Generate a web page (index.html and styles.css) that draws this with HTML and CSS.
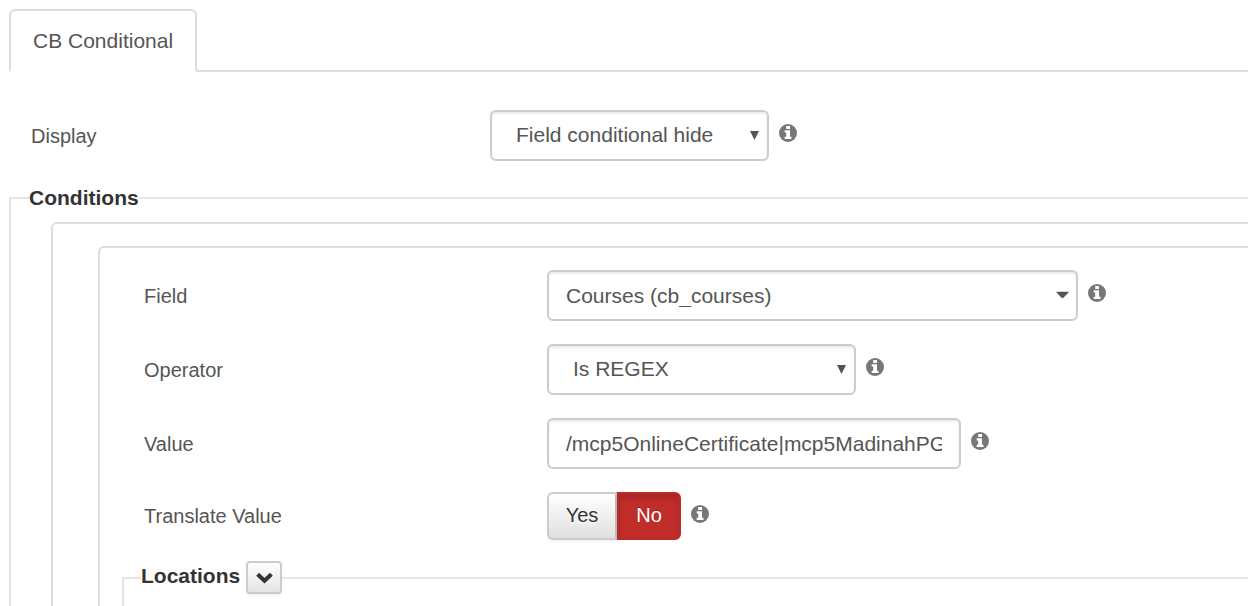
FILE: index.html
```html
<!DOCTYPE html>
<html lang="en">
<head>
  <meta charset="UTF-8">
  <meta name="viewport" content="width=device-width, initial-scale=1.0">
  <title>CB Conditional</title>
  <link rel="stylesheet" href="styles.css">
</head>
<body>
  <svg width="0" height="0" class="sprite" aria-hidden="true">
    <symbol id="info" viewBox="0 0 18 18">
      <circle cx="9" cy="9" r="9" fill="#777"/>
      <path fill="#fff" d="M7.200 2h3.800v3H7.200zM5.700 6.200H11v6.500h1.500V15H5.700v-2.300h1.500V8.500H5.700z"/>
    </symbol>
    <symbol id="arrow" viewBox="0 0 9 9">
      <path fill="#555" d="M0 0h9L4.500 9z"/>
    </symbol>
    <symbol id="caret" viewBox="0 0 14 8">
      <path fill="#555" d="M1 .5h12q1 .5 .3 1.2L8 7q-1 .8-2 0L.7 1.700Q0 1 1 .5z"/>
    </symbol>
  </svg>

  <div class="page">
    <nav class="tabs">
      <a class="tab" href="#conditional">CB Conditional</a>
    </nav>

    <form class="pane" id="conditional">
      <div class="row row-display">
        <label for="display">Display</label>
        <div class="select">
          <select id="display" class="control size-small">
            <option>Field conditional hide</option>
          </select>
          <svg class="arrow"><use href="#arrow"/></svg>
        </div>
        <svg class="info"><use href="#info"/></svg>
      </div>

      <fieldset class="conditions">
        <legend>Conditions</legend>
        <div class="box">
          <div class="box">
            <div class="rows">
              <div class="row">
                <label for="field">Field</label>
                <div class="select">
                  <select id="field" class="control size-large">
                    <option>Courses (cb_courses)</option>
                  </select>
                  <svg class="caret"><use href="#caret"/></svg>
                </div>
                <svg class="info"><use href="#info"/></svg>
              </div>

              <div class="row">
                <label for="operator">Operator</label>
                <div class="select">
                  <select id="operator" class="control size-medium">
                    <option>Is REGEX</option>
                  </select>
                  <svg class="arrow"><use href="#arrow"/></svg>
                </div>
                <svg class="info"><use href="#info"/></svg>
              </div>

              <div class="row">
                <label for="value">Value</label>
                <input type="text" id="value" class="control size-input" value="/mcp5OnlineCertificate|mcp5MadinahPG">
                <svg class="info"><use href="#info"/></svg>
              </div>

              <div class="row row-toggle">
                <label for="translate-no">Translate Value</label>
                <div class="btn-group">
                  <button type="button" class="btn">Yes</button>
                  <button type="button" class="btn btn-danger" id="translate-no">No</button>
                </div>
                <svg class="info"><use href="#info"/></svg>
              </div>
            </div>

            <fieldset class="locations">
              <legend>
                Locations
                <button type="button" class="btn-toggle" aria-label="Toggle locations">
                  <svg viewBox="0 0 16 11"><path d="M1.500 2l6.500 6 6.500-6" fill="none" stroke="#333" stroke-width="3.800"/></svg>
                </button>
              </legend>
            </fieldset>
          </div>
        </div>
      </fieldset>
    </form>
  </div>
</body>
</html>
```
FILE: styles.css
```css
* {
  box-sizing: border-box;
}

body {
  margin: 0;
  background-color: #fff;
  color: #555;
  font-family: "Liberation Sans", Arial, sans-serif;
  font-size: 20px;
  line-height: 24px;
}

.sprite {
  position: absolute;
}

.page {
  padding: 9px 0 0 9px;
}

/* Tabs */
.tabs {
  display: flex;
  height: 63px;
  border-bottom: 2px solid #ddd;
}

.tab {
  height: 63px;
  padding: 18px 22px;
  border: 2px solid #ddd;
  border-bottom-color: #fff;
  border-radius: 6px 6px 0 0;
  background-color: #fff;
  color: #555;
  font-size: 21px;
  text-decoration: none;
}

.pane {
  padding-top: 38px;
}

/* Rows */
.rows {
  display: flex;
  flex-direction: column;
  gap: 23px;
  padding: 22px 0 21px 44px;
}

.row {
  display: flex;
  align-items: center;
}

.row label {
  flex: 0 0 403px;
}

.row-display {
  padding-left: 22px;
  margin-bottom: 25px;
}

.row-display label {
  flex-basis: 459px;
}

.row-toggle {
  height: 48px;
}

.info {
  flex: none;
  width: 18px;
  height: 18px;
  margin: 0 0 5px 10px;
}

/* Controls */
.control {
  display: block;
  height: 51px;
  padding: 0 17px;
  border: 2px solid #ccc;
  border-radius: 6px;
  background-color: #fff;
  box-shadow: inset 0 2px 2px rgba(0, 0, 0, 0.075);
  color: #555;
  font-family: inherit;
  font-size: 21px;
  appearance: none;
}

.select {
  position: relative;
}

.select .control {
  padding: 0 24px 2px;
}

.select .size-large {
  padding: 0 17px;
}

.size-small {
  width: 279px;
}

.size-medium {
  width: 309px;
}

.size-input {
  width: 414px;
}

.size-large {
  width: 531px;
}

.arrow {
  position: absolute;
  top: 21px;
  right: 10px;
  width: 9px;
  height: 9px;
  pointer-events: none;
}

.caret {
  position: absolute;
  top: 21px;
  right: 9px;
  width: 13px;
  height: 8px;
  pointer-events: none;
}

/* Buttons */
.btn-group {
  display: flex;
}

.btn {
  width: 70px;
  height: 48px;
  padding: 0 0 2px;
  border: 2px solid #ccc;
  border-right-color: #bbb;
  border-radius: 6px 0 0 6px;
  background: linear-gradient(#fff, #e0e0e0);
  box-shadow: 0 2px 2px rgba(0, 0, 0, 0.05);
  color: #333;
  font-family: inherit;
  font-size: 20px;
  text-shadow: 0 2px 2px rgba(255, 255, 255, 0.75);
}

.btn-danger {
  width: 64px;
  border-color: #b92c28;
  border-radius: 0 6px 6px 0;
  background: #c12e2a;
  box-shadow: inset 0 4px 6px rgba(0, 0, 0, 0.15);
  color: #fff;
  text-shadow: 0 -1px 0 rgba(0, 0, 0, 0.25);
}

.btn-toggle {
  display: flex;
  align-items: center;
  justify-content: center;
  width: 36px;
  height: 33px;
  padding: 0;
  border: 2px solid #ccc;
  border-radius: 4px;
  background: linear-gradient(#fff, #e4e4e4);
  box-shadow: 0 2px 2px rgba(0, 0, 0, 0.05);
}

.btn-toggle svg {
  width: 17px;
  height: 12px;
}

/* Fieldsets */
fieldset {
  min-width: 0;
  margin: 0;
  padding: 0;
  border: 2px solid #e5e5e5;
  border-width: 2px 0 0 2px;
}

legend {
  padding: 0;
  color: #333;
  font-size: 21px;
  font-weight: bold;
}

.conditions {
  padding: 12px 0 0 40px;
}

.conditions > legend {
  margin-left: -22px;
}

.box {
  border: 2px solid #ddd;
  border-width: 2px 0 0 2px;
  border-radius: 6px 0 0 0;
}

.box > .box {
  margin: 22px 0 0 45px;
}

.locations {
  min-height: 45px;
  margin-left: 22px;
}

.locations > legend {
  display: flex;
  align-items: flex-start;
  gap: 6px;
  margin-left: 17px;
  line-height: 30px;
}
```
